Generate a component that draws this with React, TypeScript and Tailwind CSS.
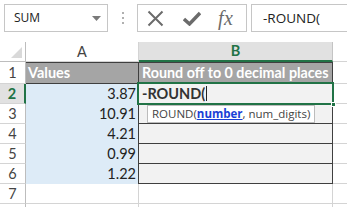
import React from "react";

const rows = [
  { n: "3", a: "10.91" },
  { n: "4", a: "4.21" },
  { n: "5", a: "0.99" },
  { n: "6", a: "1.22" },
];

export default function App() {
  return (
    <div className="w-[347px] h-[207px] bg-white overflow-hidden relative font-['Lato',sans-serif] text-[#222]">
      {/* formula bar */}
      <div className="h-[32px] flex items-start pt-[4px] pl-[4px]">
        <div className="w-[104px] h-[28px] border border-[#c6c6c6] flex items-center justify-between pl-[9px] pr-[6px] text-[12px] font-['Open_Sans',sans-serif] text-[#222]">
          <span>SUM</span>
          <svg width="9" height="5" viewBox="0 0 9 5"><path d="M0 0H9L4.5 5Z" fill="#7a7a7a" /></svg>
        </div>
        <div className="w-[29px] h-[28px] flex flex-col items-center justify-center gap-[3px]">
          <div className="w-[2px] h-[2px] bg-[#b0b0b0]" />
          <div className="w-[2px] h-[2px] bg-[#b0b0b0]" />
          <div className="w-[2px] h-[2px] bg-[#b0b0b0]" />
        </div>
        <div className="w-[110px] h-[28px] border border-[#c6c6c6] flex items-center pl-[9px]">
          <svg width="17" height="17" viewBox="0 0 17 17" className="mr-[19px]">
            <path d="M1.5 1.5L15.5 15.5M15.5 1.5L1.5 15.5" stroke="#6b6b6b" strokeWidth="2" fill="none" />
          </svg>
          <svg width="18" height="15" viewBox="0 0 18 15" className="mr-[17px]">
            <path d="M1 8L6.5 13L17 2" stroke="#6b6b6b" strokeWidth="3.4" fill="none" />
          </svg>
          <span className="font-['Liberation_Serif',serif] italic text-[20px] text-[#6b6b6b] leading-none tracking-[0.5px]">fx</span>
        </div>
        <div className="ml-[4px] flex-1 h-[28px] border border-[#c6c6c6] border-r-0 flex items-center pl-[11px] text-[13.5px] font-['Open_Sans',sans-serif] text-[#222]">
          -ROUND(
        </div>
      </div>
      <div className="h-[10px]" />

      {/* column headers */}
      <div className="flex h-[20px] text-[14.5px]">
        <div className="w-[26px] border-r border-[#bdbdbd] border-b flex items-end justify-end pr-[3px] pb-[3px]">
          <svg width="11" height="11" viewBox="0 0 11 11"><path d="M11 0V11H0Z" fill="#d9d9d9" /></svg>
        </div>
        <div className="w-[113px] border-r border-b border-[#d4d4d4] flex items-center justify-center text-[#444]">A</div>
        <div className="w-[194px] bg-[#e1e1e1] border-r border-[#c4c4c4] border-b-2 border-b-[#217346] flex items-center justify-center font-bold text-[#217346]">B</div>
        <div className="flex-1 border-b border-[#d4d4d4]" />
      </div>

      {/* row 1 */}
      <div className="flex h-[22px] text-[14.5px]">
        <div className="w-[26px] border-r border-b border-r-[#bdbdbd] border-b-[#d4d4d4] flex items-center justify-center text-[#444]">1</div>
        <div className="w-[113px] bg-[#a5a5a5] border border-l-0 border-[#3f3f3f] flex items-center pl-[2px] font-bold text-white">Values</div>
        <div className="w-[194px] bg-[#a5a5a5] border-y border-r border-[#3f3f3f] flex items-center pl-[3px] font-bold text-white text-[14.3px] whitespace-nowrap">Round off to 0 decimal places</div>
        <div className="flex-1 border-b border-[#d4d4d4]" />
      </div>

      {/* row 2 */}
      <div className="flex h-[20px] text-[14.5px]">
        <div className="w-[26px] bg-[#e1e1e1] border-r-2 border-r-[#217346] border-b border-b-[#d4d4d4] flex items-center justify-center font-bold text-[#217346]">2</div>
        <div className="w-[113px] bg-[#ddebf7] border-r border-[#3f3f3f] flex items-center justify-end pr-[2px]">3.87</div>
        <div className="w-[194px] relative bg-[#f2f2f2] border-r border-b border-[#3f3f3f] flex items-center pl-[3px] font-bold text-[#333]">
          <span>-ROUND(</span>
          <span className="w-[1px] h-[15px] bg-[#222] ml-[1px]" />
          <div className="absolute left-[-2px] top-[-2px] right-[-2px] bottom-[-2px] border-2 border-[#217346]" />
          <div className="absolute right-[-4px] bottom-[-4px] w-[5px] h-[5px] bg-[#217346] border border-white" />
        </div>
        <div className="flex-1 border-b border-[#d4d4d4]" />
      </div>

      {rows.map((r) => (
        <div key={r.n} className="flex h-[20px] text-[14.5px]">
          <div className="w-[26px] border-r border-b border-r-[#bdbdbd] border-b-[#d4d4d4] flex items-center justify-center text-[#444]">{r.n}</div>
          <div className="w-[113px] bg-[#ddebf7] border-r border-[#3f3f3f] flex items-center justify-end pr-[2px]">{r.a}</div>
          <div className="w-[194px] bg-[#f2f2f2] border-r border-b border-[#3f3f3f]" />
          <div className="flex-1 border-b border-[#d4d4d4]" />
        </div>
      ))}

      {/* row 7 */}
      <div className="flex h-[20px] text-[14.5px]">
        <div className="w-[26px] border-r border-b border-r-[#bdbdbd] border-b-[#d4d4d4] flex items-center justify-center text-[#444]">7</div>
        <div className="w-[113px] border-r border-b border-[#d4d4d4]" />
        <div className="w-[194px] border-r border-b border-[#d4d4d4]" />
        <div className="flex-1 border-b border-[#d4d4d4]" />
      </div>
      <div className="flex h-[20px]">
        <div className="w-[26px] border-r border-[#bdbdbd]" />
        <div className="w-[113px] border-r border-[#d4d4d4]" />
        <div className="w-[194px] border-r border-[#d4d4d4]" />
      </div>

      {/* tooltip */}
      <div className="absolute left-[147px] top-[105px] w-[168px] h-[18px] bg-white border border-[#bcbcbc] flex items-center pl-[4px] text-[11.5px] font-['Open_Sans',sans-serif] text-[#444] whitespace-nowrap">
        ROUND(<span className="font-bold text-[#1a3fd6] underline">number</span>, num_digits)
      </div>
    </div>
  );
}
